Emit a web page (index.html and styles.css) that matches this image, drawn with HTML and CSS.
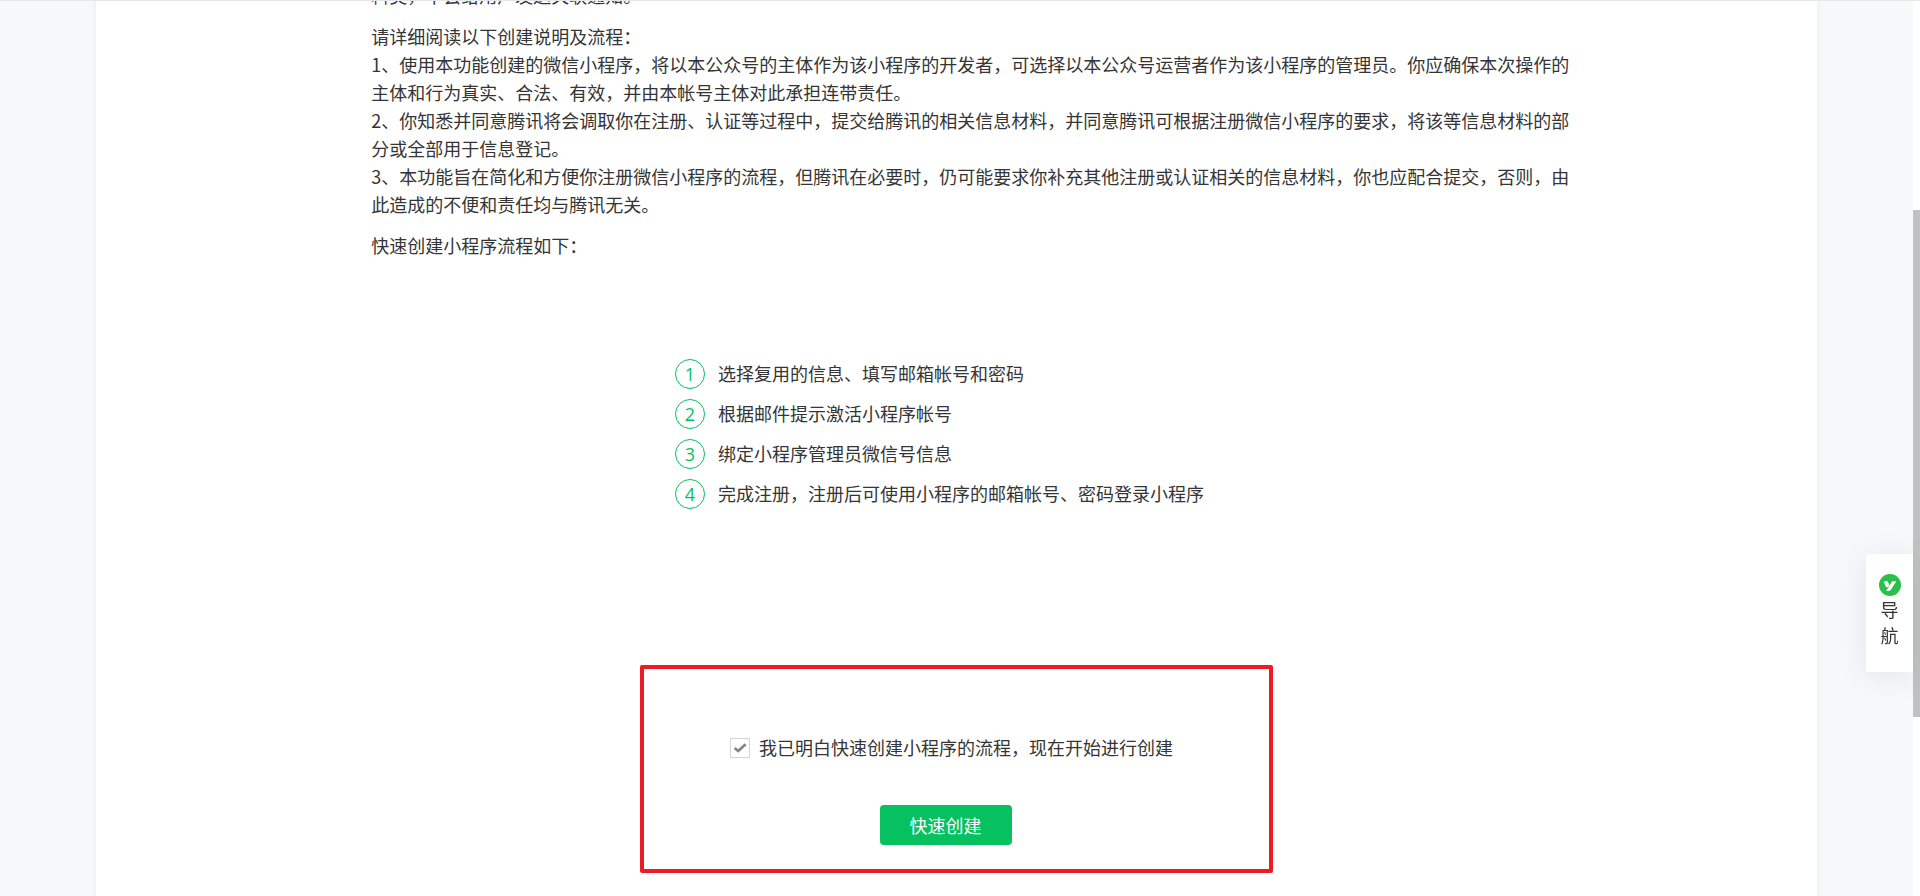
FILE: index.html
```
<!DOCTYPE html>
<html lang="zh-CN">
<head>
<meta charset="utf-8">
<title>快速创建小程序</title>
<link rel="stylesheet" href="styles.css">
</head>
<body>
<div class="page">
  <main class="panel">
    <article class="article">
      <p class="text">料类，不会给用户发送关联通知。</p>
      <div class="text">
        <p>请详细阅读以下创建说明及流程：</p>
        <p>1、使用本功能创建的微信小程序，将以本公众号的主体作为该小程序的开发者，可选择以本公众号运营者作为该小程序的管理员。你应确保本次操作的主体和行为真实、合法、有效，并由本帐号主体对此承担连带责任。</p>
        <p>2、你知悉并同意腾讯将会调取你在注册、认证等过程中，提交给腾讯的相关信息材料，并同意腾讯可根据注册微信小程序的要求，将该等信息材料的部分或全部用于信息登记。</p>
        <p>3、本功能旨在简化和方便你注册微信小程序的流程，但腾讯在必要时，仍可能要求你补充其他注册或认证相关的信息材料，你也应配合提交，否则，由此造成的不便和责任均与腾讯无关。</p>
      </div>
      <p class="text">快速创建小程序流程如下：</p>
    </article>
    <ol class="steps">
      <li class="step"><span class="step-no">1</span><span class="step-text">选择复用的信息、填写邮箱帐号和密码</span></li>
      <li class="step"><span class="step-no">2</span><span class="step-text">根据邮件提示激活小程序帐号</span></li>
      <li class="step"><span class="step-no">3</span><span class="step-text">绑定小程序管理员微信号信息</span></li>
      <li class="step"><span class="step-no">4</span><span class="step-text">完成注册，注册后可使用小程序的邮箱帐号、密码登录小程序</span></li>
    </ol>
    <form class="confirm">
      <label class="agree" for="agree">
        <span class="check">
          <input class="check-input" type="checkbox" id="agree" checked>
          <svg class="check-mark" viewBox="0 0 20 20" aria-hidden="true"><path d="M4.6 10 8.2 13 15.6 6.2" fill="none" stroke="#858688" stroke-width="2.8"/></svg>
        </span>
        <span class="agree-text">我已明白快速创建小程序的流程，现在开始进行创建</span>
      </label>
      <button class="submit" type="button">快速创建</button>
    </form>
  </main>
  <div class="scrollbar"><div class="thumb"></div></div>
</div>
<a class="nav" href="#">
  <svg class="nav-logo" viewBox="0 0 22 22" aria-hidden="true"><circle cx="11" cy="11" r="11" fill="#29bf4a"/><path d="M4.8 7.2H8.7Q9.6 9.2 10.4 11.4L8.6 13.4Q6.6 13.2 6 11Z" fill="#fff"/><path d="M13.2 7.2H17.4L12 15.4Q11 16.9 9.3 16.9H7.2Z" fill="#fff"/></svg>
  <span class="nav-text">导航</span>
</a>
</body>
</html>
```
FILE: styles.css
```
* {
  box-sizing: border-box;
}

body,
p,
ol {
  margin: 0;
  padding: 0;
}

body {
  height: 100vh;
  overflow: hidden;
  background: #f6f8fa;
  color: #353535;
  font: 400 18px/28px "Noto Sans CJK SC", sans-serif;
}

.page {
  display: flex;
  height: 100%;
  border-top: 1px solid #e4e8eb;
  overflow: hidden;
}

.panel {
  flex: 1;
  margin: 0 96px;
  background: #fff;
  box-shadow: 0 0 6px rgba(0, 0, 0, 0.06);
}

.article {
  display: flex;
  flex-direction: column;
  gap: 13px;
  margin-top: -20px;
  padding: 0 14% 0 16%;
}

.steps {
  display: flex;
  flex-direction: column;
  gap: 10px;
  width: max-content;
  margin: 100px auto 0;
  padding-right: 34px;
  list-style: none;
}

.step {
  display: flex;
  gap: 13px;
}

.step-no {
  display: flex;
  align-items: center;
  justify-content: center;
  width: 30px;
  height: 30px;
  border: 1px solid #07c160;
  border-radius: 50%;
  color: #07c160;
  font-family: "Open Sans", sans-serif;
}

.confirm {
  display: flex;
  flex-direction: column;
  align-items: center;
  gap: 44px;
  width: max-content;
  margin: 156px auto 0;
  padding: 64px 108px 24px 86px;
  border: 4px solid #ed1c24;
  border-radius: 2px;
}

.agree {
  display: flex;
  gap: 9px;
  margin-right: -12px;
}

.check {
  position: relative;
  display: flex;
  margin-top: 5px;
  height: 20px;
}

.check-input {
  appearance: none;
  width: 20px;
  height: 20px;
  margin: 0;
  border: 1px solid #d3d4d8;
  background: #fff;
}

.check-mark {
  position: absolute;
  inset: 0;
  display: none;
}

.check-input:checked + .check-mark {
  display: block;
}

.submit {
  padding: 6px 30px;
  border: 0;
  border-radius: 4px;
  background: #07c160;
  color: #fff;
  font: inherit;
}

.scrollbar {
  width: 7px;
  padding-top: 209px;
  background: #fff;
}

.thumb {
  height: 507px;
  background: #c1c1c1;
}

.nav {
  position: fixed;
  top: 554px;
  right: 7px;
  display: flex;
  flex-direction: column;
  align-items: center;
  width: 47px;
  padding: 20px 14px;
  border-radius: 2px 0 0 2px;
  background: #fff;
  box-shadow: 0 4px 28px rgba(60, 90, 110, 0.1);
  color: #353535;
  line-height: 26px;
  text-decoration: none;
}

.nav-logo {
  width: 22px;
  height: 22px;
}

.nav-text {
  width: 18px;
  padding-bottom: 4px;
}
```
